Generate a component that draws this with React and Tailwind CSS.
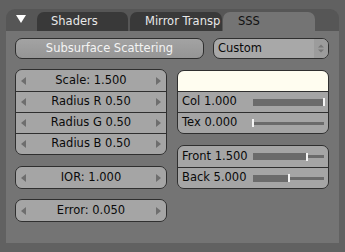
import React from 'react';

const font = { fontFamily: '"DejaVu Sans", "Liberation Sans", sans-serif' };

function Arrow({ dir }) {
    return (
        <svg width="5" height="8" viewBox="0 0 5 8" className="shrink-0">
            {dir === 'left'
                ? <path d="M5 0 L0 4 L5 8 Z" fill="#6e6e6e" />
                : <path d="M0 0 L5 4 L0 8 Z" fill="#6e6e6e" />}
        </svg>
    );
}

function NumRow({ label, className = '' }) {
    return (
        <div className={`h-[21px] flex items-center justify-between px-[5px] bg-[#a5a5a5] text-[#0a0a0a] text-[11.5px] ${className}`}>
            <Arrow dir="left" />
            <span className="leading-none">{label}</span>
            <Arrow dir="right" />
        </div>
    );
}

// slider row: label on left, bar with marker on right
function SliderRow({ label, value, className = '' }) {
    return (
        <div className={`h-[21px] flex items-center bg-[#a5a5a5] text-[#0a0a0a] text-[11.5px] pl-[4px] pr-[4px] ${className}`}>
            <span className="w-[71px] leading-none whitespace-nowrap">{label}</span>
            <div className="relative flex-1 h-[8px] flex items-center">
                <div className="absolute left-0 right-0 h-[3px] bg-[#6b6b6b]" />
                <div className="absolute left-0 h-[7px] bg-[#6b6b6b]" style={{ width: `${value * 100}%` }} />
                <div className="absolute h-[8px] w-[2px] bg-[#f4f4f4]" style={{ left: `calc(${value * 100}% - 1px)` }} />
            </div>
        </div>
    );
}

export default function App() {
    return (
        <div className="w-[345px] h-[252px] bg-[#616161] pt-[9px] pl-[6px]" style={font}>
            <div className="w-[333px] h-[234px] flex flex-col">
                {/* tab header */}
                <div className="h-[22px] bg-[#565656] rounded-t-[9px] flex items-end pl-[10px]">
                    <svg width="10" height="9" viewBox="0 0 10 9" className="mb-[7px] mr-[11px]">
                        <path d="M0 0 L10 0 L5 8 Z" fill="#ffffff" />
                    </svg>
                    <div className="w-[91px] h-[19px] bg-[#393939] rounded-t-[7px] text-[#e8e8e8] text-[11.5px] pl-[14px] flex items-center">Shaders</div>
                    <div className="w-[92px] h-[19px] ml-[2px] bg-[#393939] rounded-t-[7px] text-[#e8e8e8] text-[11.5px] pl-[15px] flex items-center overflow-hidden whitespace-nowrap">Mirror Transp</div>
                    <div className="w-[92px] h-[19px] ml-[1px] bg-[#747474] rounded-t-[7px] text-[#111] text-[11.5px] pl-[15px] flex items-center">SSS</div>
                </div>

                {/* body */}
                <div className="flex-1 bg-[#747474] pl-[9px] pr-[10px] pt-[7px]">
                    <div className="flex justify-between">
                        <div className="w-[189px] h-[21px] rounded-[7px] border border-[#2f2f2f] bg-gradient-to-b from-[#a3a3a3] to-[#959595] text-[#f4f4f4] text-[11.5px] flex items-center justify-center">
                            Subsurface Scattering
                        </div>
                        <div className="w-[116px] h-[21px] rounded-[7px] border border-[#2f2f2f] bg-[#a8a8a8] text-[#0a0a0a] text-[11.5px] flex items-center overflow-hidden">
                            <span className="flex-1 pl-[4px]">Custom</span>
                            <div className="w-[14px] h-full bg-[#9c9c9c] flex flex-col items-center justify-center">
                                <svg width="6" height="9" viewBox="0 0 6 9">
                                    <path d="M0 3.5 L3 0.5 L6 3.5 Z" fill="#777" />
                                    <path d="M0 5.5 L3 8.5 L6 5.5 Z" fill="#777" />
                                </svg>
                            </div>
                        </div>
                    </div>

                    <div className="flex gap-[10px] mt-[10px]">
                        {/* left column */}
                        <div className="w-[152px] flex flex-col">
                            <div className="rounded-[7px] border border-[#2f2f2f] overflow-hidden">
                                <NumRow label="Scale: 1.500" className="h-[20px]" />
                                <NumRow label="Radius R 0.50" className="border-t border-[#2f2f2f]" />
                                <NumRow label="Radius G 0.50" className="border-t border-[#2f2f2f]" />
                                <NumRow label="Radius B 0.50" className="border-t border-[#2f2f2f]" />
                            </div>
                            <div className="mt-[11px] rounded-[7px] border border-[#2f2f2f] overflow-hidden">
                                <NumRow label="IOR: 1.000" className="h-[20px]" />
                            </div>
                            <div className="mt-[10px] rounded-[7px] border border-[#2f2f2f] overflow-hidden">
                                <NumRow label="Error: 0.050" className="h-[20px]" />
                            </div>
                        </div>

                        {/* right column */}
                        <div className="w-[152px] flex flex-col mt-[1px]">
                            <div className="rounded-[7px] border border-[#2f2f2f] overflow-hidden">
                                <div className="h-[20px] bg-[#fffdf0]" />
                                <SliderRow label="Col 1.000" value={1} className="border-t border-[#2f2f2f]" />
                                <SliderRow label="Tex 0.000" value={0} className="border-t border-[#2f2f2f]" />
                            </div>
                            <div className="mt-[11px] rounded-[7px] border border-[#2f2f2f] overflow-hidden">
                                <SliderRow label="Front 1.500" value={0.76} className="h-[20px]" />
                                <SliderRow label="Back 5.000" value={0.5} className="border-t border-[#2f2f2f]" />
                            </div>
                        </div>
                    </div>
                </div>
            </div>
        </div>
    );
}
